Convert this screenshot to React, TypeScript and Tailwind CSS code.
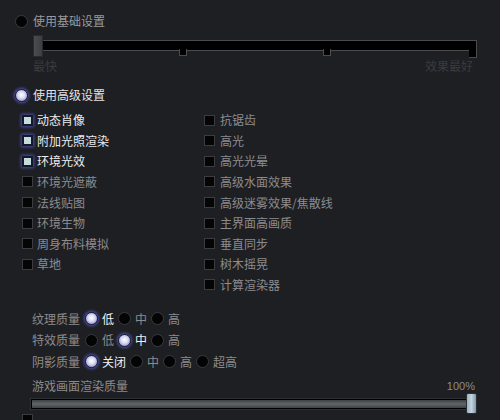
import React from 'react';

const leftItems = [
  { label: '动态肖像', checked: true },
  { label: '附加光照渲染', checked: true },
  { label: '环境光效', checked: true },
  { label: '环境光遮蔽', checked: false },
  { label: '法线贴图', checked: false },
  { label: '环境生物', checked: false },
  { label: '周身布料模拟', checked: false },
  { label: '草地', checked: false },
];

const rightItems = [
  '抗锯齿',
  '高光',
  '高光光晕',
  '高级水面效果',
  '高级迷雾效果/焦散线',
  '主界面高画质',
  '垂直同步',
  '树木摇晃',
  '计算渲染器',
];

const qualityRows = [
  { label: '纹理质量', options: ['低', '中', '高'], selected: 0 },
  { label: '特效质量', options: ['低', '中', '高'], selected: 1 },
  { label: '阴影质量', options: ['关闭', '中', '高', '超高'], selected: 0 },
];

function Radio({ on }: { on: boolean }) {
  if (on) {
    return (
      <div className="w-[13px] h-[13px] shrink-0 rounded-full border border-[#23254a] bg-[radial-gradient(circle_at_50%_45%,#ffffff_0%,#dcdcf4_40%,#9c9cd0_75%)] shadow-[0_0_3px_1px_rgba(96,104,220,0.75)]" />
    );
  }
  return <div className="w-[13px] h-[13px] shrink-0 rounded-full border border-[#3a3a3e] bg-[#040404]" />;
}

function Check({ on }: { on: boolean }) {
  if (on) {
    return (
      <div className="w-[11px] h-[11px] shrink-0 border-2 border-[#15172a] bg-[#c4dcdc] shadow-[0_0_3px_1px_rgba(90,96,210,0.75)]" />
    );
  }
  return <div className="w-[11px] h-[11px] shrink-0 border border-[#3c3c40] bg-[#050505]" />;
}

function Notch({ left }: { left: number }) {
  return (
    <div
      className="absolute top-full -mt-px w-[8px] h-[7px] bg-black border-x border-b border-[#4b4b4f]"
      style={{ left }}
    />
  );
}

export default function App() {
  return (
    <div
      className="w-[500px] h-[420px] overflow-hidden bg-[#1e1f23] px-[15px] text-[12px] leading-[14px]"
      style={{ fontFamily: '"Noto Sans CJK SC", "Noto Sans", sans-serif' }}
    >
      {/* basic */}
      <div className="mt-[14px] h-[14px] flex items-center">
        <Radio on={false} />
        <span className="ml-[5px] text-[#9a9a9c]">使用基础设置</span>
      </div>

      <div className="relative mt-[12px] ml-[18px] w-[444px] h-[11px] bg-black border-y border-[#4b4b4f]">
        <Notch left={146} />
        <Notch left={290} />
        <div className="absolute right-0 -top-px w-[8px] h-[18px] bg-black border-x border-b border-t border-[#4b4b4f] border-l-0" />
        <div className="absolute left-0 top-[-6px] w-[10px] h-[22px] bg-gradient-to-r from-[#4c4c50] to-[#3e3e42] border border-[#2a2a2e]" />
      </div>

      <div className="mt-[8px] ml-[18px] w-[440px] flex justify-between text-[#3a3b3f]">
        <span>最快</span>
        <span>效果最好</span>
      </div>

      {/* advanced */}
      <div className="mt-[15px] h-[14px] flex items-center">
        <Radio on={true} />
        <span className="ml-[5px] text-[#e4e4e6]">使用高级设置</span>
      </div>

      <div className="mt-[8px] flex">
        <div className="w-[189px] pl-[7px]">
          {leftItems.map((it) => (
            <div key={it.label} className="h-[20.57px] flex items-center">
              <Check on={it.checked} />
              <span className={`ml-[4px] ${it.checked ? 'text-[#ececee]' : 'text-[#8c8c8e]'}`}>{it.label}</span>
            </div>
          ))}
        </div>
        <div>
          {rightItems.map((label) => (
            <div key={label} className="h-[20.57px] flex items-center">
              <Check on={false} />
              <span className="ml-[5px] text-[#8c8c8e]">{label}</span>
            </div>
          ))}
        </div>
      </div>

      {/* quality */}
      <div className="mt-[13px] ml-[17px]">
        {qualityRows.map((row) => (
          <div key={row.label} className="h-[21.5px] flex items-center">
            <span className="w-[48px] text-[#8c8c8e]">{row.label}</span>
            <div className="ml-[5px] flex items-center">
              {row.options.map((opt, i) => (
                <div key={opt} className="flex items-center mr-[4px]">
                  <Radio on={i === row.selected} />
                  <span className={`ml-[4px] ${i === row.selected ? 'text-[#f0f0f2]' : 'text-[#8c8c8e]'}`}>{opt}</span>
                </div>
              ))}
            </div>
          </div>
        ))}
      </div>

      <div className="mt-[6px] ml-[17px] w-[443px] flex justify-between text-[#8c8c8e]">
        <span>游戏画面渲染质量</span>
        <span className="text-[11px]" style={{ fontFamily: '"Liberation Sans", sans-serif' }}>100%</span>
      </div>

      <div className="relative mt-[5px] ml-[15px] w-[440px] h-[12px] border border-[#2e3134] bg-black p-px">
        <div className="h-full bg-gradient-to-b from-[#3c4043] via-[#62676b] to-[#3c4043]" />
        <div className="absolute left-[435px] top-[-6px] w-[11px] h-[21px] rounded-[2px] border border-[#2a3036] bg-gradient-to-r from-[#9db2c2] via-[#c4d4e0] to-[#8298a8]" />
      </div>

      <div className="mt-[4px] pl-[7px] flex items-center">
        <Check on={false} />
      </div>
    </div>
  );
}
